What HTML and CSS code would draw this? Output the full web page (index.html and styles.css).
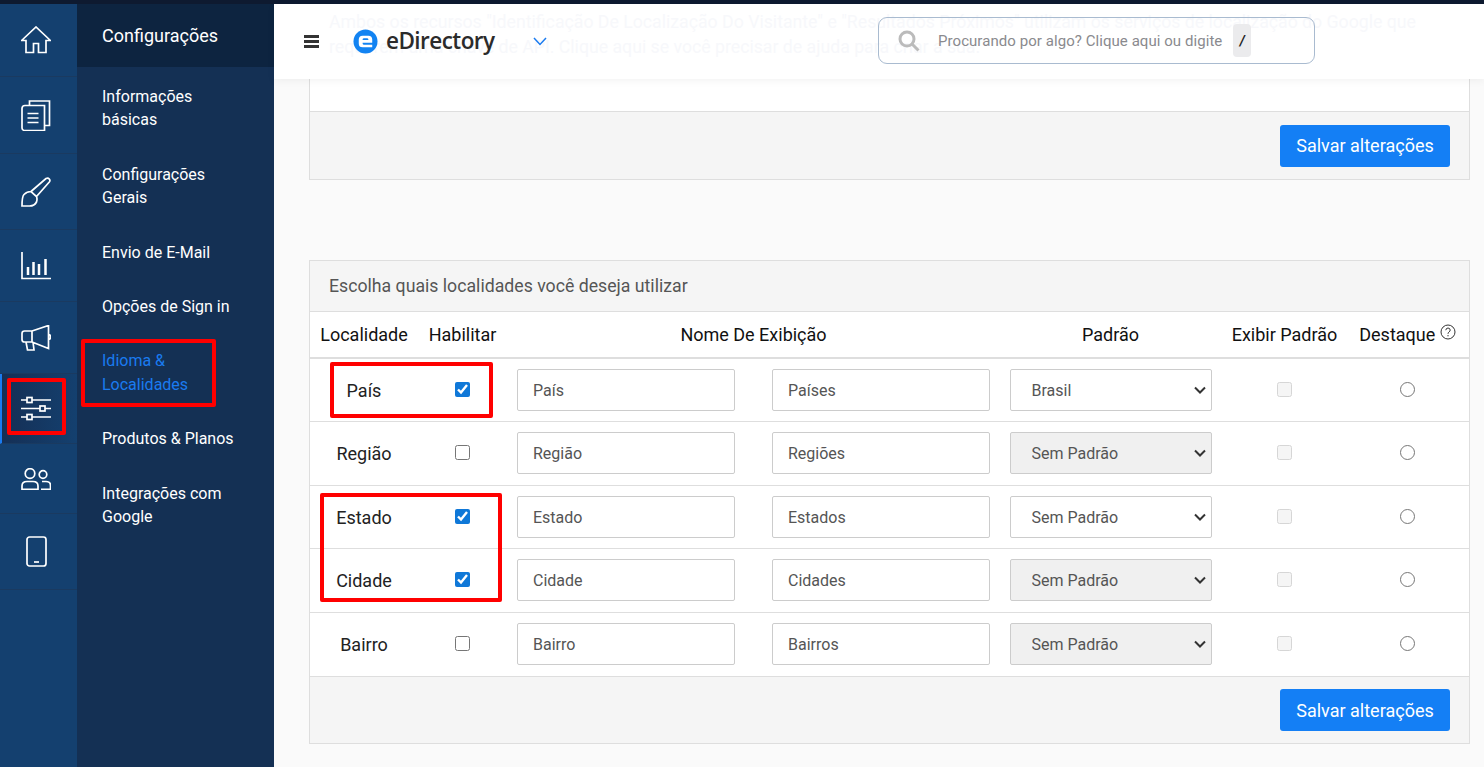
FILE: index.html
```html
<!DOCTYPE html>
<html lang="pt-BR">
<head>
<meta charset="utf-8">
<title>eDirectory - Idioma &amp; Localidades</title>
<link rel="stylesheet" href="styles.css">
</head>
<body>
<div class="topline"></div>
<div class="app">
  <nav class="rail">
    <a class="rail-item h73"><svg viewBox="0 0 30 28" class="ic ic-home"><path d="M.6 14.500 15 1l14.400 13.500h-4.400V26.500h-7.500V17.500h-5v9H5V14.500z" /></svg></a>
    <a class="rail-item h77"><svg viewBox="0 0 30 31" class="ic ic-docs"><path d="M8.500 5.500V1h20v24.500h-5M1 8.500q0-3 3-3h19.500v25H4q-3 0-3-3z"/><path d="M6.500 13.500h11M6.500 18h11M6.500 22.500h11"/></svg></a>
    <a class="rail-item h76"><svg viewBox="0 0 30 30" class="ic ic-brush"><path d="M10 14.500 25 1.500q2-1 3.300.5 1.200 1.500 0 3L15.500 19.500M10 14.500q-4 0-7 3-2 2-2 11.500h7.500q5 0 7-4 1-3 0-5.500z"/></svg></a>
    <a class="rail-item h72"><svg viewBox="0 0 30 28" class="ic ic-chart"><path d="M1 0v26.500h29"/><path d="M7 15v8M12.500 10v13M18 12v11M24.500 7v16" class="thick"/></svg></a>
    <a class="rail-item h72"><svg viewBox="0 0 30 26" class="ic ic-mega"><path d="M11 6H3.500Q1 6 1 8.500v6Q1 17 3.500 17H11zM11 6 27.500 0.500v23L11 17M27.500 9.500q2 0 2 2.500t-2 2.500M5 17l1.500 8H13l-1-8"/></svg></a>
    <a class="rail-item h70 active"><svg viewBox="0 0 30 25" class="ic ic-sliders"><path d="M0 4h6M11 4h19M0 12.500h19M24 12.500h6M0 21h6M11 21h19"/><rect x="6" y="1.500" width="5" height="5"/><rect x="19" y="10" width="5" height="5"/><rect x="6" y="18.500" width="5" height="5"/></svg></a>
    <a class="rail-item h70"><svg viewBox="0 0 30 22" class="ic ic-users"><circle cx="9" cy="5.500" r="4.800"/><path d="M1 21.300V18q0-4.500 5-4.500h6q5 0 5 4.500v3.300z"/><circle cx="22" cy="6.500" r="3.800"/><path d="M21 13.500h4q4.500 0 4.500 4v3.800H20"/></svg></a>
    <a class="rail-item h76"><svg viewBox="0 0 21 31" class="ic ic-phone"><rect x="1" y="1" width="19" height="29" rx="2.500"/><path d="M8 26h5" /></svg></a>
  </nav>
  <aside class="subnav">
    <h2 class="subnav-title">Configurações</h2>
    <a class="subnav-link">Informações<br>básicas</a>
    <a class="subnav-link">Configurações<br>Gerais</a>
    <a class="subnav-link">Envio de E-Mail</a>
    <a class="subnav-link">Opções de Sign in</a>
    <a class="subnav-link current">Idioma &amp;<br>Localidades</a>
    <a class="subnav-link">Produtos &amp; Planos</a>
    <a class="subnav-link">Integrações com<br>Google</a>
  </aside>
  <div class="main">
    <header class="header">
      <p class="ghost">Ambos os recursos "Identificação De Localização Do Visitante" e "Resultados Próximos" utilizam os serviços de localização do Google que<br>requerem uma chave de API. Clique aqui se você precisar de ajuda para criar a sua.</p>
      <button class="burger" aria-label="Menu"><span></span><span></span><span></span></button>
      <div class="brand">
        <svg class="brand-mark" viewBox="0 0 26 26"><circle cx="13" cy="13" r="12.500" fill="#1283f2"/><path d="M6 11q0-4 4-4h6q4 0 4 4v3.200H10v1q0 1.300 1.500 1.300H20V19H10q-4 0-4-4zM10 11.500h6V11q0-1.300-1.500-1.300h-3Q10 9.700 10 11z" fill="#fff" fill-rule="evenodd"/></svg>
        <span class="brand-name">eDirectory</span>
      </div>
      <svg class="chev" viewBox="0 0 14 9"><path d="M1 1l6 6.500L13 1"/></svg>
      <div class="search">
        <svg class="search-ic" viewBox="0 0 22 22"><circle cx="9" cy="9" r="7"/><path d="M14 14l6.500 6.500"/></svg>
        <span class="search-text">Procurando por algo? Clique aqui ou digite</span>
        <kbd class="slash">/</kbd>
      </div>
    </header>
    <div class="content">
      <section class="card card-top">
        <div class="card-blank"></div>
        <div class="card-foot"><button class="save">Salvar alterações</button></div>
      </section>
      <section class="card card-loc">
        <div class="card-head">Escolha quais localidades você deseja utilizar</div>
        <div class="row row-head">
          <div class="c1">Localidade</div>
          <div class="c2">Habilitar</div>
          <div class="c3">Nome De Exibição</div>
          <div class="c4">Padrão</div>
          <div class="c5">Exibir Padrão</div>
          <div class="c6">Destaque <svg class="help" viewBox="0 0 16 16"><circle cx="8" cy="8" r="7"/><path d="M5.800 6.200Q6 4 8 4t2.200 2q0 1.300-1.200 2-1 .6-1 1.800M8 11v1.300"/></svg></div>
        </div>
        <div class="row r1">
          <div class="c1 name">País</div>
          <div class="c2 cell"><input type="checkbox" class="check" checked></div>
          <div class="c3 pair"><input class="field" value="País"><input class="field" value="Países"></div>
          <div class="c4 cell"><select class="pick"><option>Brasil</option></select></div>
          <div class="c5 cell"><span class="off-check"></span></div>
          <div class="c6 cell"><input type="radio" class="radio"></div>
        </div>
        <div class="row r2">
          <div class="c1 name">Região</div>
          <div class="c2 cell"><input type="checkbox" class="check"></div>
          <div class="c3 pair"><input class="field" value="Região"><input class="field" value="Regiões"></div>
          <div class="c4 cell"><select class="pick dim"><option>Sem Padrão</option></select></div>
          <div class="c5 cell"><span class="off-check"></span></div>
          <div class="c6 cell"><input type="radio" class="radio"></div>
        </div>
        <div class="row r3">
          <div class="c1 name">Estado</div>
          <div class="c2 cell"><input type="checkbox" class="check" checked></div>
          <div class="c3 pair"><input class="field" value="Estado"><input class="field" value="Estados"></div>
          <div class="c4 cell"><select class="pick"><option>Sem Padrão</option></select></div>
          <div class="c5 cell"><span class="off-check"></span></div>
          <div class="c6 cell"><input type="radio" class="radio"></div>
        </div>
        <div class="row r4">
          <div class="c1 name">Cidade</div>
          <div class="c2 cell"><input type="checkbox" class="check" checked></div>
          <div class="c3 pair"><input class="field" value="Cidade"><input class="field" value="Cidades"></div>
          <div class="c4 cell"><select class="pick dim"><option>Sem Padrão</option></select></div>
          <div class="c5 cell"><span class="off-check"></span></div>
          <div class="c6 cell"><input type="radio" class="radio"></div>
        </div>
        <div class="row r5">
          <div class="c1 name">Bairro</div>
          <div class="c2 cell"><input type="checkbox" class="check"></div>
          <div class="c3 pair"><input class="field" value="Bairro"><input class="field" value="Bairros"></div>
          <div class="c4 cell"><select class="pick dim"><option>Sem Padrão</option></select></div>
          <div class="c5 cell"><span class="off-check"></span></div>
          <div class="c6 cell"><input type="radio" class="radio"></div>
        </div>
        <div class="card-foot foot-b"><button class="save">Salvar alterações</button></div>
      </section>
    </div>
  </div>
</div>
<div class="mark mark-rail"></div>
<div class="mark mark-link"></div>
<div class="mark mark-pais"></div>
<div class="mark mark-est"></div>
</body>
</html>
```
FILE: styles.css
```css
* { box-sizing: border-box; }
html, body { margin: 0; height: 100%; overflow: hidden; }
body { font-family: Roboto, "Noto Sans", sans-serif; background: #fafafa; color: #111; position: relative; }
.topline { height: 4px; background: #0e1a30; }
.app { display: flex; height: 763px; }

.rail { width: 77px; flex: none; background: #14406f; display: flex; flex-direction: column; }
.rail-item { display: flex; align-items: center; justify-content: center; border-bottom: 1px solid #1a3a60; padding-right: 5px; }
.h73 { height: 73px; } .h77 { height: 77px; } .h76 { height: 76px; } .h72 { height: 72px; } .h70 { height: 70px; }
.rail-item.active { background: linear-gradient(90deg, #152f55, #14406f); border-left: 2px solid #1a7bf0; padding-right: 7px; }
.ic { fill: none; stroke: #fff; stroke-width: 1.700; display: block; width: 30px; }
.ic-home { height: 28px; } .ic-docs { height: 31px; } .ic-brush { height: 30px; } .ic-chart { height: 28px; }
.ic-mega { height: 26px; } .ic-sliders { height: 25px; } .ic-users { height: 22px; } .ic-phone { width: 21px; height: 31px; }
.ic .thick { stroke-width: 2.500px; }

.subnav { width: 197px; flex: none; background: #143054; color: #fff; display: flex; flex-direction: column; }
.subnav-title { margin: 0; height: 63px; background: #0d2440; padding: 21px 0 0 25px; font-size: 18px; font-weight: 400; line-height: 22px; }
.subnav-link { display: block; padding: 0 10px 0 25px; font-size: 16px; line-height: 23.200px; margin-top: 31.400px; }
.subnav-title + .subnav-link { margin-top: 18px; }
.subnav-link.current { color: #1a7bf0; line-height: 24px; margin-top: 30.700px; margin-bottom: -1.200px; }

.main { flex: 1; min-width: 0; position: relative; display: flex; flex-direction: column; }
.header { height: 75px; flex: none; background: #fff; display: flex; align-items: center; padding: 0 0 1px 30px; position: relative; box-shadow: 0 2px 8px rgba(0,0,0,.05); z-index: 2; }
.ghost { position: absolute; left: 55px; top: 6px; margin: 0; font-size: 17.700px; line-height: 25px; color: #f7f8fb; white-space: nowrap; }
.burger { width: 15px; height: 13px; padding: 0; border: 0; background: none; display: flex; flex-direction: column; justify-content: space-between; position: relative; }
.burger span { height: 3px; background: #333; display: block; }
.brand { display: flex; align-items: center; gap: 8px; margin-left: 34px; position: relative; }
.brand-mark { width: 25px; height: 25px; display: block; }
.brand-name { font-family: "Open Sans", sans-serif; font-size: 22.500px; font-weight: 600; color: #2b2b2b; letter-spacing: -.55px; padding-bottom: 2px; }
.chev { width: 14px; height: 9px; margin-left: 39px; fill: none; stroke: #1a7bf0; stroke-width: 1.500; position: relative; }
.search { position: absolute; left: 604px; top: 13px; width: 437px; height: 47px; border: 1px solid #a9bbd0; border-radius: 9px; display: flex; align-items: center; padding-left: 19px; }
.search-ic { width: 22px; height: 22px; fill: none; stroke: #bbb; stroke-width: 3; }
.search-text { margin-left: 18px; font-size: 15px; color: #8a8a8e; letter-spacing: .06px; white-space: nowrap; }
.slash { margin-left: 11px; width: 18px; height: 33px; background: #ebebed; border-radius: 4px; font: italic 700 14px Roboto, sans-serif; color: #222; display: flex; align-items: center; justify-content: center; }

.content { flex: 1; padding: 0 14px 0 35px; display: flex; flex-direction: column; }
.card { border: 1px solid #dedede; background: #fff; }
.card-top { border-top: 0; }
.card-blank { height: 32px; }
.card-foot { height: 68px; background: #f5f5f5; border-top: 1px solid #dedede; display: flex; align-items: center; justify-content: flex-end; padding-right: 19px; }
.foot-b { height: 67px; }
.save { width: 170px; height: 42px; border: 0; border-radius: 3px; background: #147ff5; color: #fff; font: 400 18px Roboto, sans-serif; }
.card-loc { margin-top: 80px; }
.card-head { height: 51px; background: #f5f5f5; border-bottom: 1px solid #dedede; display: flex; align-items: center; padding-left: 19px; font-size: 17.700px; color: #555; }

.row { display: grid; grid-template-columns: 108px 89px 493px 221px 127px 1fr; align-items: center; border-bottom: 1px solid #dedede; text-align: center; font-size: 18px; }
.row-head { height: 47px; border-bottom: 2px solid #dedede; color: #111; }
.r1 { height: 63px; } .r2 { height: 64px; padding-bottom: 1px; } .r3 { height: 63px; } .r4 { height: 64px; padding-bottom: 1px; } .r5 { height: 63px; border-bottom: 0; padding-bottom: 1px; }
.name { color: #222; }
.cell { display: flex; justify-content: center; align-items: center; padding-bottom: 1px; }
.c4.cell { padding-bottom: 0; }
.c6 { white-space: nowrap; padding-right: 2px; }
.pair { display: flex; justify-content: flex-start; gap: 37px; padding-left: 10px; }
.field { width: 218px; height: 42px; border: 1px solid #ccc; border-radius: 2px; padding: 0 15px; font: 400 16px Roboto, sans-serif; color: #555; background: #fff; }
.pick { appearance: none; width: 202px; height: 42px; border: 1px solid #ccc; border-radius: 2px; padding: 0 17px 0 21px; font: 400 16px Roboto, sans-serif; color: #555; background: #fff url("data:image/svg+xml,%3Csvg xmlns='http://www.w3.org/2000/svg' width='12' height='8'%3E%3Cpath d='M1 1.500l5 5 5-5' fill='none' stroke='%23333' stroke-width='2'/%3E%3C/svg%3E") no-repeat right 5px center; }
.pick.dim { background-color: #f0f0f0; }
.check { width: 15px; height: 15px; margin: 0; accent-color: #0f78d8; }
.radio { width: 15px; height: 15px; margin: 0; }
.off-check { display: block; width: 15px; height: 15px; border: 1px solid #d6d6d6; border-radius: 2.500px; background: #f5f5f5; }
.help { width: 16px; height: 16px; fill: none; stroke: #333; stroke-width: 1; vertical-align: 1px; }

.mark { position: absolute; border: 4px solid #f00; border-radius: 2px; pointer-events: none; z-index: 5; }
.mark-rail { left: 7px; top: 378px; width: 59px; height: 57px; }
.mark-link { left: 81px; top: 339px; width: 135px; height: 68px; }
.mark-pais { left: 330px; top: 362px; width: 163px; height: 56px; }
.mark-est { left: 320px; top: 493px; width: 182px; height: 109px; }
```
